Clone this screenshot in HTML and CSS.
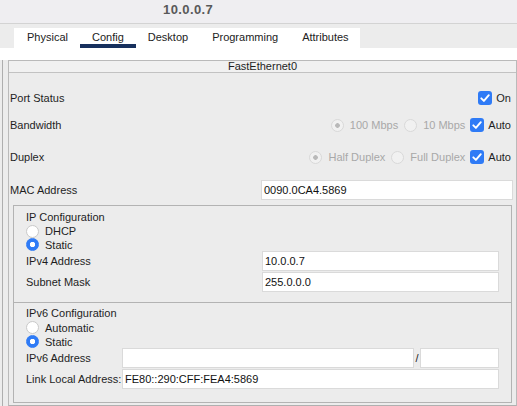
FILE: index.html
```html
<!DOCTYPE html>
<html>
<head>
<meta charset="utf-8">
<link rel="stylesheet" href="styles.css">
</head>
<body>
<div class="titlebar"><span class="title">10.0.0.7</span></div>
<div class="tabbar">
  <div class="tabs">
    <span class="tab">Physical</span>
    <span class="tab active">Config</span>
    <span class="tab">Desktop</span>
    <span class="tab">Programming</span>
    <span class="tab">Attributes</span>
  </div>
</div>
<div class="band"></div>
<div class="outer">
  <div class="fe">
    <div class="fe-head">FastEthernet0</div>
    <div class="row r1">
      <span class="label">Port Status</span>
      <div class="ctrls">
        <span class="opt cbopt"><span class="cb"><svg width="14" height="14" viewBox="0 0 14 14"><path d="M3.3 7.3 L5.9 9.9 L10.8 4.2" fill="none" stroke="#fff" stroke-width="1.9" stroke-linecap="round" stroke-linejoin="round"/></svg></span>On</span>
      </div>
    </div>
    <div class="row r2">
      <span class="label">Bandwidth</span>
      <div class="ctrls">
        <span class="opt dis"><span class="radio dis on"></span>100 Mbps</span>
        <span class="opt dis"><span class="radio dis"></span>10 Mbps</span>
        <span class="opt cbopt"><span class="cb"><svg width="14" height="14" viewBox="0 0 14 14"><path d="M3.3 7.3 L5.9 9.9 L10.8 4.2" fill="none" stroke="#fff" stroke-width="1.9" stroke-linecap="round" stroke-linejoin="round"/></svg></span>Auto</span>
      </div>
    </div>
    <div class="row r3">
      <span class="label">Duplex</span>
      <div class="ctrls">
        <span class="opt dis"><span class="radio dis on"></span>Half Duplex</span>
        <span class="opt dis"><span class="radio dis"></span>Full Duplex</span>
        <span class="opt cbopt"><span class="cb"><svg width="14" height="14" viewBox="0 0 14 14"><path d="M3.3 7.3 L5.9 9.9 L10.8 4.2" fill="none" stroke="#fff" stroke-width="1.9" stroke-linecap="round" stroke-linejoin="round"/></svg></span>Auto</span>
      </div>
    </div>
    <div class="row r4">
      <span class="label">MAC Address</span>
      <div class="input mac">0090.0CA4.5869</div>
    </div>

    <div class="ipbox v4">
      <div class="cap">IP Configuration</div>
      <div class="ropt h14"><span class="radio"></span>DHCP</div>
      <div class="ropt h13"><span class="radio on"></span>Static</div>
      <div class="field">
        <span class="flabel">IPv4 Address</span>
        <div class="input">10.0.0.7</div>
      </div>
      <div class="field gap1">
        <span class="flabel">Subnet Mask</span>
        <div class="input">255.0.0.0</div>
      </div>
    </div>

    <div class="ipbox v6">
      <div class="cap">IPv6 Configuration</div>
      <div class="ropt h15"><span class="radio"></span>Automatic</div>
      <div class="ropt h13"><span class="radio on"></span>Static</div>
      <div class="field">
        <span class="flabel">IPv6 Address</span>
        <div class="addr6">
          <div class="input grow"></div>
          <span class="slash">/</span>
          <div class="input prefix"></div>
        </div>
      </div>
      <div class="field gap1">
        <span class="flabel">Link Local Address:</span>
        <div class="input">FE80::290:CFF:FEA4:5869</div>
      </div>
    </div>
  </div>
</div>
</body>
</html>
```
FILE: styles.css
```css
html, body {
  margin: 0;
  padding: 0;
}
body {
  width: 517px;
  height: 406px;
  overflow: hidden;
  background: #ececec;
  font-family: "Liberation Sans", Arial, sans-serif;
  font-size: 11px;
  color: #1e1e1e;
}

.titlebar {
  height: 23px;
  background: #efeef1;
  border-bottom: 1px solid #d3d3d3;
  box-sizing: content-box;
}
.title {
  display: block;
  padding-left: 163px;
  padding-top: 1px;
  line-height: 18px;
  font-size: 13px;
  font-weight: bold;
  letter-spacing: 0.4px;
  color: #595959;
}

.tabbar {
  height: 24px;
  background: #ececec;
  display: flex;
  align-items: flex-end;
}
.tabs {
  margin-left: 14px;
  width: 346px;
  height: 20px;
  background: #fff;
  display: flex;
  padding-left: 1px;
  box-sizing: border-box;
}
.tab {
  padding: 2px 12px 0;
  line-height: 14px;
  border-bottom: 4px solid transparent;
  color: #222;
}
.tab.active {
  border-bottom-color: #17305d;
}

.band {
  height: 12px;
  background: #fff;
}

.outer {
  margin-left: 2px;
  border-left: 1px solid #aeaeae;
  padding-left: 5px;
  height: 346px;
}
.fe {
  border: 1px solid #bababa;
  border-bottom: 1px solid #b0b0b0;
  background: #ececec;
  padding-bottom: 2px;
}
.fe-head {
  height: 11px;
  line-height: 11px;
  text-align: center;
  background: #f1f1f1;
  border-bottom: 1px solid #c2c2c2;
  color: #1e1e1e;
}

.row {
  display: flex;
  align-items: center;
  padding: 0 3px 0 1px;
}
.r1 { margin-top: 18px; height: 14px; }
.r2 { margin-top: 13px; height: 14px; }
.r3 { margin-top: 18px; height: 14px; }
.r4 { margin-top: 16px; height: 20px; }

.ctrls {
  margin-left: auto;
  margin-right: 2px;
  display: flex;
  align-items: center;
  gap: 6px;
}
.opt {
  display: flex;
  align-items: center;
  gap: 6px;
}
.opt.cbopt {
  gap: 4px;
  margin-left: -1px;
}
.opt.dis {
  color: #a8a8a8;
}

.cb {
  width: 14px;
  height: 14px;
  border-radius: 3px;
  background: #2f7bf6;
  display: flex;
}

.radio {
  width: 13px;
  height: 13px;
  box-sizing: border-box;
  border-radius: 50%;
  border: 1px solid #c9c9c9;
  background: #fff;
  flex: none;
}
.radio.on {
  border-color: #2f7bf6;
  background: radial-gradient(circle, #fff 0 2.4px, #2f7bf6 3px);
}
.radio.dis {
  border-color: #d9d9d9;
  background: #f1f1f1;
}
.radio.dis.on {
  background: radial-gradient(circle, #b9b9b9 0 2px, #f1f1f1 2.6px);
}

.input {
  height: 20px;
  box-sizing: border-box;
  background: #fff;
  border: 1px solid #dadada;
  padding-left: 2px;
  line-height: 18px;
  color: #111;
  white-space: nowrap;
  overflow: hidden;
}
.mac {
  margin-left: auto;
  width: 252px;
}

.ipbox {
  margin: 0 4px;
  border: 1px solid #b3b3b3;
  padding: 4px 12px 10px;
}
.ipbox.v4 {
  margin-top: 5px;
}
.ipbox.v6 {
  border-top: none;
  padding-top: 3px;
  padding-bottom: 13px;
}
.cap {
  height: 14px;
  line-height: 14px;
}
.ropt {
  display: flex;
  align-items: center;
  gap: 6px;
}
.h13 { height: 13px; }
.h14 { height: 14px; }
.h15 { height: 15px; }

.field {
  display: grid;
  grid-template-columns: 236px 1fr;
  align-items: center;
  height: 20px;
}
.v6 .field {
  grid-template-columns: 96px 1fr;
}
.gap1 {
  margin-top: 1px;
}
.flabel {
  white-space: nowrap;
}
.addr6 {
  display: flex;
  align-items: center;
}
.grow {
  flex: 1;
}
.slash {
  width: 6px;
  text-align: center;
  color: #222;
}
.prefix {
  width: 79px;
}
```
